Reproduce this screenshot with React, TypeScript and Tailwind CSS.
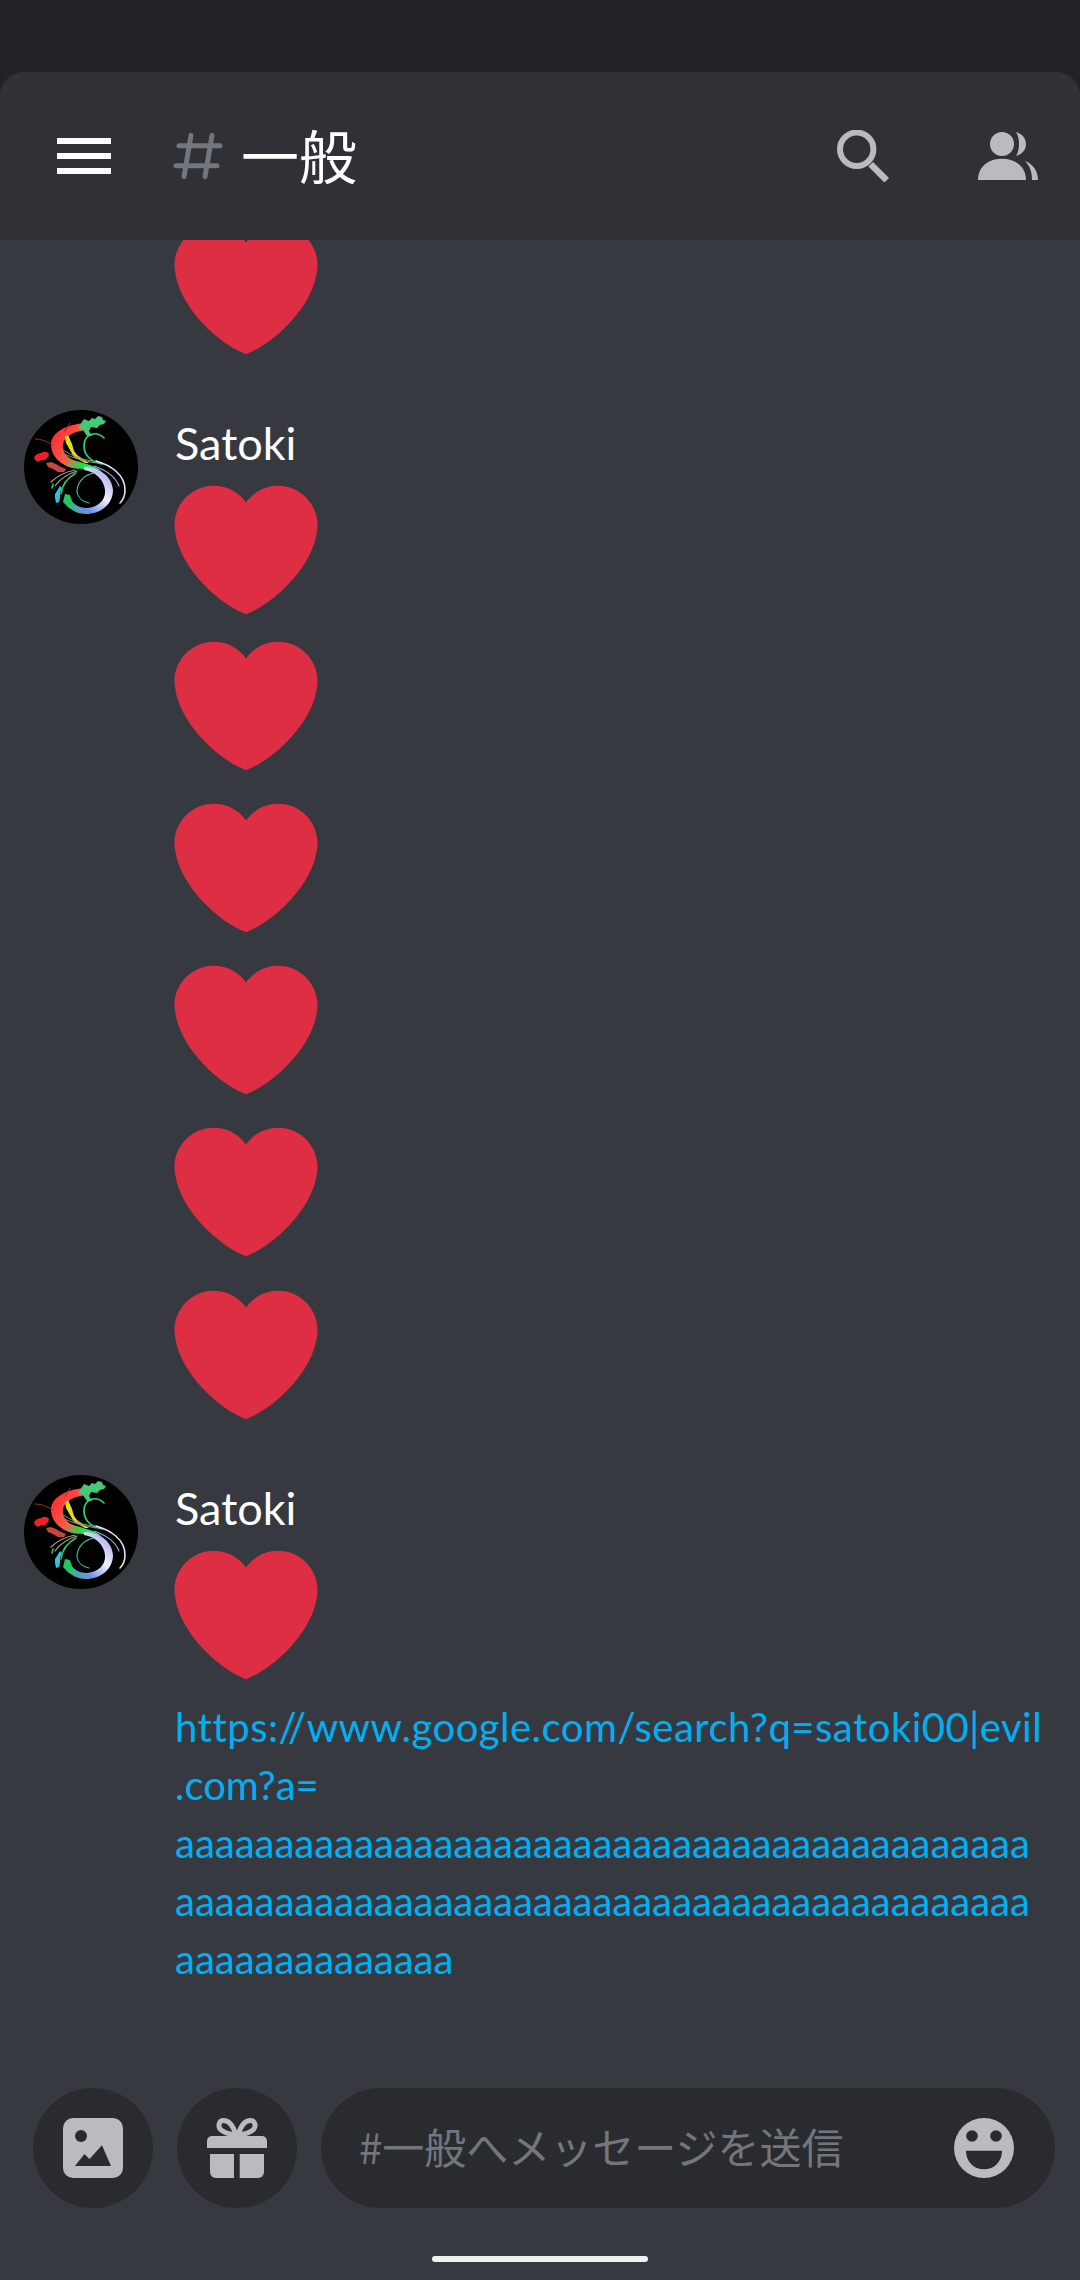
const CJK = "font-['Noto_Sans_CJK_JP','Noto_Sans',sans-serif]"

function Heart({ className = "" }: { className?: string }) {
  return (
    <svg viewBox="0 0 36 36" className={`block w-[144px] h-[144px] ${className}`}>
      <path
        fill="#DD2E44"
        d="M35.885 11.833c0-5.45-4.418-9.868-9.867-9.867-3.308 0-6.227 1.633-8.018 4.129-1.791-2.496-4.71-4.129-8.017-4.129-5.45 0-9.868 4.417-9.868 9.867 0 .772.098 1.52.266 2.241C1.751 22.587 11.216 31.568 18 34.034c6.783-2.466 16.249-11.447 17.617-19.959.17-.721.268-1.469.268-2.242z"
      />
    </svg>
  )
}

function Avatar({ id }: { id: string }) {
  return (
    <svg viewBox="0 0 114 114" className="block w-[114px] h-[114px] shrink-0">
      <defs>
        <linearGradient id={`${id}-a`} x1="30" y1="25" x2="78" y2="60" gradientUnits="userSpaceOnUse">
          <stop offset="0" stopColor="#ff2f35" />
          <stop offset="0.4" stopColor="#ff5a48" />
          <stop offset="0.68" stopColor="#17e34a" />
          <stop offset="1" stopColor="#7fd8b8" />
        </linearGradient>
        <linearGradient id={`${id}-b`} x1="85" y1="60" x2="45" y2="104" gradientUnits="userSpaceOnUse">
          <stop offset="0" stopColor="#a9a6ee" />
          <stop offset="0.4" stopColor="#eef2fb" />
          <stop offset="0.74" stopColor="#6d8eea" />
          <stop offset="1" stopColor="#22c765" />
        </linearGradient>
      </defs>
      <circle cx="57" cy="57" r="57" fill="#000" />
      {/* body */}
      <path d="M62 13C42 14 26 23 27 36C28 47 37 55 48 58C58 60 68 58 78 61C68 54 57 53 47 49C40 45 37 38 40 31C44 24 52 21 64 20Z" fill={`url(#${id}-a)`} />
      <path d="M56 15l4-6 5 2 3-3 3 1 3-3 4 1 1 3 3 1-2 3-4 1-3 3-6-1-2 4 3 5-5 0-4-6-5-2z" fill="#45c978" />
      <path d="M41 27l3-2 4 9 2 7 3 4 12 8-4 0-11-6-4-7-4-7z" fill="#e8dc1c" />
      {/* lower ring */}
      <path d="M60 57C75 57 88 66 89 80C89 94 77 104 62 104C53 104 46 100 41 93L45 88C50 95 56 98 63 98C74 97 82 90 81 80C80 70 72 62 60 60Z" fill={`url(#${id}-b)`} />
      <path d="M41 84l5 1 2 6 2 5-5 2-6-6z" fill="#22c760" />
      {/* thin curls */}
      <g fill="none" strokeLinecap="round">
        <path d="M80 28C72 20 60 24 60 36C60 46 68 52 78 54" stroke="#2ed38a" strokeWidth="1.6" />
        <path d="M72 51C86 55 101 64 101 80C101 86 99 90 96 93" stroke="#dfe6f0" strokeWidth="1.6" />
        <path d="M70 56C82 60 91 66 95 76" stroke="#9aa3e0" strokeWidth="1.2" />
        <path d="M70 63C59 65 53 73 53 82C54 88 59 92 65 93" stroke="#34cfa0" strokeWidth="1.1" />
        <path d="M46 13l-5 8M11 29c7 0 13 3 18 6" stroke="#a8252a" strokeWidth="1" />
        <path d="M27 72c6-6 14-10 24-12M31 76c5-7 12-12 22-15" stroke="#a8a08e" strokeWidth="1.2" />
        <path d="M40 44c9 4 20 7 32 9M38 39c8 6 18 10 30 12" stroke="#8a8f7c" strokeWidth="1" />
        <path d="M37 84c1-9 6-16 15-21M29 74l-1 4" stroke="#2bc468" strokeWidth="1.6" />
      </g>
      {/* feathers */}
      <path d="M10 47l3-3 4-1 2-1 4 0 2 2-1 3-3 3-4 0-3 2-3-2z" fill="#f01f26" />
      <path d="M22 53l5-1 5 2 5 3 5 2-2 3-6 0-5-3-5-2z" fill="#c9463f" />
      <path d="M36 76l2 2-2 5 0 5-1 4-3 1-1-5 0-4 2-3z" fill="#27c6da" />
    </svg>
  )
}

function Message({ id, children }: { id: string; children: React.ReactNode }) {
  return (
    <div className="flex pl-[24px] mt-[48px]">
      <Avatar id={id} />
      <div className="ml-[36px] min-w-0">
        <div className="h-[68px] leading-[66px] text-[45px] pl-[1px] text-white font-['Lato','Noto_Sans',sans-serif]">Satoki</div>
        {children}
      </div>
    </div>
  )
}

function CircleButton({ children }: { children: React.ReactNode }) {
  return (
    <button className="w-[120px] h-[120px] rounded-full bg-[#2a2b2f] flex items-center justify-center shrink-0">
      {children}
    </button>
  )
}

export default function App() {
  return (
    <div className="w-[1080px] h-[2280px] bg-[#202225] overflow-hidden flex flex-col">
      <div className="h-[72px] shrink-0" />

      <div className="flex-1 min-h-0 flex flex-col bg-[#36393f] rounded-t-[24px] overflow-hidden">
        {/* HEADER */}
        <header className="relative z-10 h-[168px] shrink-0 bg-[#2f3136] flex items-center pl-[57px] pr-[42px]">
          <div className="w-[54px] flex flex-col gap-[9px]">
            <div className="h-[6px] bg-white" />
            <div className="h-[6px] bg-white" />
            <div className="h-[6px] bg-white" />
          </div>
          <svg viewBox="0 0 50 46" className="ml-[62px] w-[50px] h-[46px]" fill="none" stroke="#72767d" strokeWidth="5" strokeLinecap="round">
            <path d="M18 2.5L11 43.5M39 2.5L32 43.5M6 12.7H47M3 32.7H44" />
          </svg>
          <div className={`ml-[18px] mb-[4px] text-[58px] leading-none text-white ${CJK}`}>一般</div>

          <svg viewBox="0 0 52 52" className="ml-auto w-[52px] h-[52px]" fill="none" stroke="#b9bbbe">
            <circle cx="19.7" cy="19.3" r="16.7" strokeWidth="6" />
            <path d="M33.7 34.3L49.7 50.3" strokeWidth="6.5" />
          </svg>
          <svg viewBox="0 0 60 48" className="ml-[89px] w-[60px] h-[48px]" fill="#b9bbbe">
            <circle cx="24" cy="12" r="12" />
            <path d="M0 48C0 35 10 26.7 24 26.7S48 35 48 48Z" />
            <path d="M38 0C44 2 48 6 48 12S44 22 38 24C42 18 42 6 38 0Z" />
            <path d="M47 29C55 32 60 39 60 48H54C54 40 52 34 47 29Z" />
          </svg>
        </header>

        {/* MESSAGES */}
        <main className="flex-1 min-h-0 overflow-hidden">
          <div className="-mt-[22px] pl-[174px]">
            <Heart />
          </div>

          <Message id="first">
            <Heart className="mb-[12px]" />
            <Heart className="mb-[18px]" />
            <Heart className="mb-[18px]" />
            <Heart className="mb-[18px]" />
            <Heart className="mb-[19px]" />
            <Heart />
          </Message>

          <Message id="second">
            <Heart />
            <div className="mt-[11px] pl-[1px] text-[40px] leading-[58px] text-[#00b0f4] whitespace-nowrap font-['Lato','Noto_Sans',sans-serif]">
              <div className="tracking-[0.5px]">https://www.google.com/search?q=satoki00|evil</div>
              <div>.com?a=</div>
              <div>aaaaaaaaaaaaaaaaaaaaaaaaaaaaaaaaaaaaaaaaaaa</div>
              <div>aaaaaaaaaaaaaaaaaaaaaaaaaaaaaaaaaaaaaaaaaaa</div>
              <div>aaaaaaaaaaaaaa</div>
            </div>
          </Message>
        </main>

        {/* COMPOSER */}
        <div className="h-[120px] shrink-0 flex pl-[33px] pr-[25px] gap-[24px]">
          <CircleButton>
            <svg viewBox="0 0 60 60" className="w-[60px] h-[60px]">
              <rect width="60" height="60" rx="10" fill="#b9bbbe" />
              <circle cx="18" cy="18" r="6" fill="#2a2b2f" />
              <path d="M12 48L21.4 36L26.5 41L39 27.3L48 48Z" fill="#2a2b2f" />
            </svg>
          </CircleButton>
          <CircleButton>
            <svg viewBox="0 0 60 60" className="w-[60px] h-[60px]" fill="#b9bbbe">
              <path d="M29 17C26 7 21 2.5 16.5 2.5C12 2.5 10.5 8 13.5 11.5C16 14 21 16 29 17Z" fill="none" stroke="#b9bbbe" strokeWidth="5" />
              <path d="M31 17C34 7 39 2.5 43.5 2.5C48 2.5 49.5 8 46.5 11.5C44 14 39 16 31 17Z" fill="none" stroke="#b9bbbe" strokeWidth="5" />
              <path d="M5 18H55A5 5 0 0 1 60 23V30H0V23A5 5 0 0 1 5 18Z" />
              <path d="M3 36H27V60H9A6 6 0 0 1 3 54Z" />
              <path d="M32.7 36H57V54A6 6 0 0 1 51 60H32.7Z" />
            </svg>
          </CircleButton>
          <div className="flex-1 rounded-full bg-[#2a2b2f] flex items-center pl-[38px] pr-[41px]">
            <div className={`mb-[5px] text-[42px] leading-none text-[#72767d] whitespace-nowrap ${CJK}`}>#一般へメッセージを送信</div>
            <svg viewBox="0 0 60 60" className="ml-auto w-[60px] h-[60px]">
              <circle cx="30" cy="30" r="30" fill="#b9bbbe" />
              <circle cx="18" cy="18" r="5.8" fill="#2a2b2f" />
              <circle cx="42" cy="18" r="5.8" fill="#2a2b2f" />
              <path d="M12 32.7H48C48 44 40 51.3 30 51.3S12 44 12 32.7Z" fill="#2a2b2f" />
            </svg>
          </div>
        </div>

        {/* HOME INDICATOR */}
        <div className="h-[72px] shrink-0 pt-[48px] flex justify-center">
          <div className="w-[216px] h-[6px] rounded-full bg-[#f0f0f0]" />
        </div>
      </div>
    </div>
  )
}
